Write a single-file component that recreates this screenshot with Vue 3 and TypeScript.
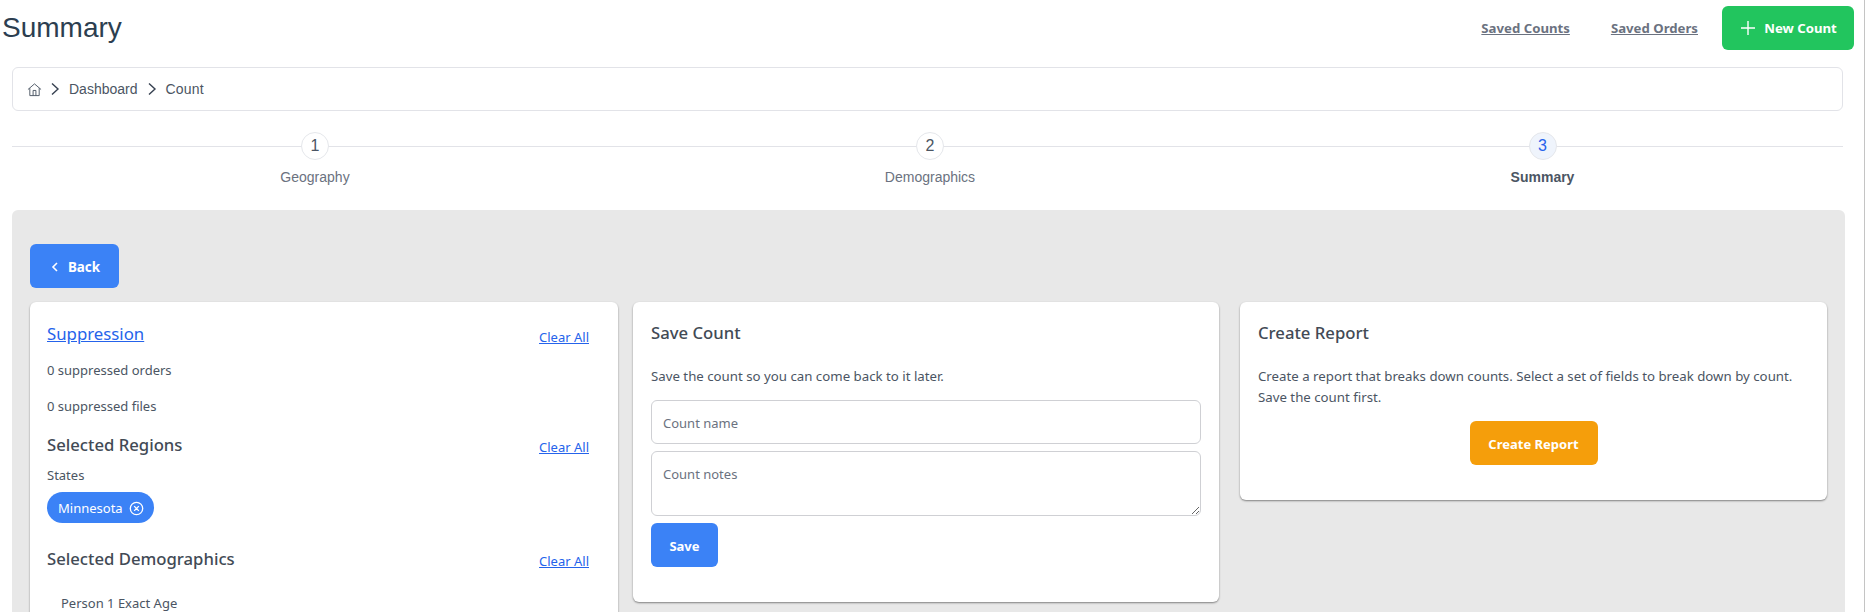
<script setup lang="ts">
const steps = [
  { n: 1, label: 'Geography', active: false },
  { n: 2, label: 'Demographics', active: false },
  { n: 3, label: 'Summary', active: true },
]
</script>

<template>
  <div class="page">
    <header class="top">
      <h1 class="title">Summary</h1>
      <nav class="actions">
        <a class="toplink" href="#">Saved Counts</a>
        <a class="toplink" href="#">Saved Orders</a>
        <button class="btn green new">
          <svg width="18" height="18" viewBox="0 0 18 18" fill="none" stroke="#fff" stroke-width="1.4"><path d="M9 2v14M2 9h14" /></svg>
          New Count
        </button>
      </nav>
    </header>

    <div class="crumbs">
      <svg class="home" width="15" height="15" viewBox="0 0 16 16" fill="none" stroke="#4b5563" stroke-width="1"><path d="M1 8l7-6 7 6M3 6.6V14.5h10V6.6M6.5 14.5V9h3v5.5" /></svg>
      <svg class="chev" width="10" height="14" viewBox="0 0 10 14" fill="none" stroke="#374151" stroke-width="1.4"><path d="M2 1.5L8 7l-6 5.5" /></svg>
      <span>Dashboard</span>
      <svg class="chev" width="10" height="14" viewBox="0 0 10 14" fill="none" stroke="#374151" stroke-width="1.4"><path d="M2 1.5L8 7l-6 5.5" /></svg>
      <span>Count</span>
    </div>

    <div class="stepper">
      <div v-for="s in steps" :key="s.n" class="step" :class="{ active: s.active }">
        <span class="dot">{{ s.n }}</span>
        <span class="label">{{ s.label }}</span>
      </div>
    </div>

    <main class="panel">
      <button class="btn blue back">
        <svg width="8" height="10" viewBox="0 0 8 10" fill="none" stroke="#fff" stroke-width="1.6"><path d="M6 1L2 5l4 4" /></svg>
        Back
      </button>
      <div class="cards">
        <section class="card left">
          <div class="rowhead first">
            <a class="supp" href="#">Suppression</a>
            <a class="clear" href="#">Clear All</a>
          </div>
          <p class="line orders">0 suppressed orders</p>
          <p class="line files">0 suppressed files</p>
          <div class="rowhead regions">
            <h3>Selected Regions</h3>
            <a class="clear" href="#">Clear All</a>
          </div>
          <p class="line states">States</p>
          <span class="chip">
            Minnesota
            <svg width="15" height="15" viewBox="0 0 16 16" fill="none" stroke="#fff" stroke-width="1.4"><circle cx="8" cy="8" r="6.6" /><path d="M5.5 5.5l5 5M10.5 5.5l-5 5" /></svg>
          </span>
          <div class="rowhead demos">
            <h3>Selected Demographics</h3>
            <a class="clear" href="#">Clear All</a>
          </div>
          <p class="line person">Person 1 Exact Age</p>
        </section>

        <section class="card mid">
          <h3>Save Count</h3>
          <p class="line desc">Save the count so you can come back to it later.</p>
          <input class="field" type="text" placeholder="Count name" />
          <textarea class="field area" placeholder="Count notes"></textarea>
          <button class="btn blue save">Save</button>
        </section>

        <section class="card right">
          <h3>Create Report</h3>
          <p class="line desc wrap">Create a report that breaks down counts. Select a set of fields to break down by count. Save the count first.</p>
          <div class="center"><button class="btn amber report">Create Report</button></div>
        </section>
      </div>
    </main>
  </div>
</template>

<style>
html, body { margin: 0; height: 612px; overflow: hidden; background: #fff; }
</style>

<style scoped>
.page {
  width: 1865px;
  height: 612px;
  overflow: hidden;
  box-sizing: border-box;
  border-right: 1px solid #c4c4c4;
  font-family: "Liberation Sans", Arial, sans-serif;
  color: #374151;
}
.top {
  display: flex;
  justify-content: space-between;
  align-items: flex-start;
  height: 67px;
  padding: 6px 10px 0 2px;
  box-sizing: border-box;
}
.title {
  margin: 0;
  font-size: 28px;
  font-weight: 400;
  line-height: 44px;
  color: #2c3e50;
}
.actions { display: flex; align-items: center; height: 44px; }
.toplink {
  font-family: "Noto Sans", sans-serif;
  font-size: 13.2px;
  font-weight: 700;
  color: #6b7280;
  margin-right: 41px;
}
.toplink + .toplink { margin-right: 24px; }
.btn {
  border: 0;
  border-radius: 6px;
  height: 44px;
  color: #fff;
  font-family: "Noto Sans", sans-serif;
  font-size: 13px;
  font-weight: 700;
  display: inline-flex;
  align-items: center;
  justify-content: center;
  padding: 0;
}
.green { background: #22c55e; }
.blue { background: #3b82f6; }
.amber { background: #f59e0b; }
.new { width: 132px; gap: 7px; font-size: 13.2px; }
.crumbs {
  margin-left: 12px;
  width: 1831px;
  height: 44px;
  box-sizing: border-box;
  border: 1px solid #e2e3e8;
  border-radius: 6px;
  display: flex;
  align-items: center;
  padding-left: 14px;
  font-size: 14px;
  color: #4b5563;
}
.home { margin-right: 8px; }
.chev { margin-right: 9px; }
.crumbs span + .chev { margin-left: 9px; }
.crumbs span:last-child { letter-spacing: 0.2px; }
.stepper {
  position: relative;
  margin: 21px 0 0 12px;
  width: 1831px;
  height: 78px;
  display: grid;
  grid-template-columns: 606px 624px 1fr;
}
.stepper::before {
  content: "";
  position: absolute;
  left: 0;
  right: 0;
  top: 14px;
  height: 1px;
  background: #e2e3e8;
}
.step {
  position: relative;
  display: flex;
  flex-direction: column;
  align-items: center;
  font-size: 14px;
  color: #6b7280;
}
.dot {
  width: 28px;
  height: 28px;
  box-sizing: border-box;
  border: 1px solid #e5e7eb;
  border-radius: 50%;
  background: #fff;
  display: flex;
  align-items: center;
  justify-content: center;
  font-size: 16px;
  color: #4b5563;
}
.label { margin-top: 9px; line-height: 17px; }
.active .dot { background: #eff4fc; color: #2563eb; }
.active .label { font-weight: 700; color: #4b5563; }
.panel {
  margin-left: 12px;
  width: 1833px;
  height: 402px;
  box-sizing: border-box;
  background: #e8e8e8;
  border-radius: 6px 6px 0 0;
  padding: 34px 17px 0 18px;
}
.back { width: 89px; gap: 9px; padding: 2px 0 0 2px; font-size: 13.4px; }
.cards { display: flex; align-items: flex-start; margin-top: 14px; }
.card {
  box-sizing: border-box;
  background: #fff;
  border-radius: 6px;
  box-shadow: 0 1px 2px rgba(0, 0, 0, 0.45);
  font-family: "Noto Sans", sans-serif;
  color: #4b5563;
}
.left { width: 588px; height: 400px; padding: 20px 29px 0 17px; margin-right: 15px; flex: none; }
.mid { width: 586px; height: 300px; padding: 19px 18px 0 18px; margin-right: 21px; flex: none; }
.right { width: 587px; height: 198px; padding: 19px 18px 0 18px; flex: none; }
h3 {
  margin: 0;
  font-size: 16.7px;
  font-weight: 500;
  line-height: 23px;
  color: #424a55;
}
.line { margin: 0; font-size: 13.25px; line-height: 21px; }
.left .line { font-size: 13px; }
.rowhead { display: flex; justify-content: space-between; align-items: center; }
.supp { font-size: 16.8px; font-weight: 400; color: #2563eb; line-height: 24px; }
.clear { font-size: 13px; color: #2563eb; position: relative; top: 2px; }
.first .clear { top: 3px; }
.orders { margin-top: 14px; }
.files { margin-top: 15px; }
.regions { margin-top: 16px; }
.states { margin-top: 9px; }
.chip {
  display: inline-flex;
  align-items: center;
  gap: 6px;
  margin-top: 6px;
  height: 31px;
  padding: 1px 10px 0 11px;
  box-sizing: border-box;
  border-radius: 16px;
  background: #3b82f6;
  color: #fff;
  font-size: 13px;
}
.demos { margin-top: 24px; }
.person { margin: 23px 0 0 14px; }
.desc { margin-top: 22px; }
.wrap { line-height: 21px; }
.field {
  display: block;
  width: 550px;
  box-sizing: border-box;
  height: 44px;
  margin-top: 13px;
  border: 1px solid #cfd0d4;
  border-radius: 6px;
  padding: 1px 11px 0;
  font-family: "Noto Sans", sans-serif;
  font-size: 13px;
  color: #4b5563;
  background: #fff;
  outline: none;
}
.field::placeholder { color: #6b7280; opacity: 1; }
.area { height: 65px; margin-top: 7px; padding: 13px 11px 0; }
.save { width: 67px; margin-top: 7px; display: flex; padding-top: 2px; }
.center { display: flex; justify-content: center; margin-top: 13px; }
.report { width: 128px; padding-top: 2px; }
</style>
